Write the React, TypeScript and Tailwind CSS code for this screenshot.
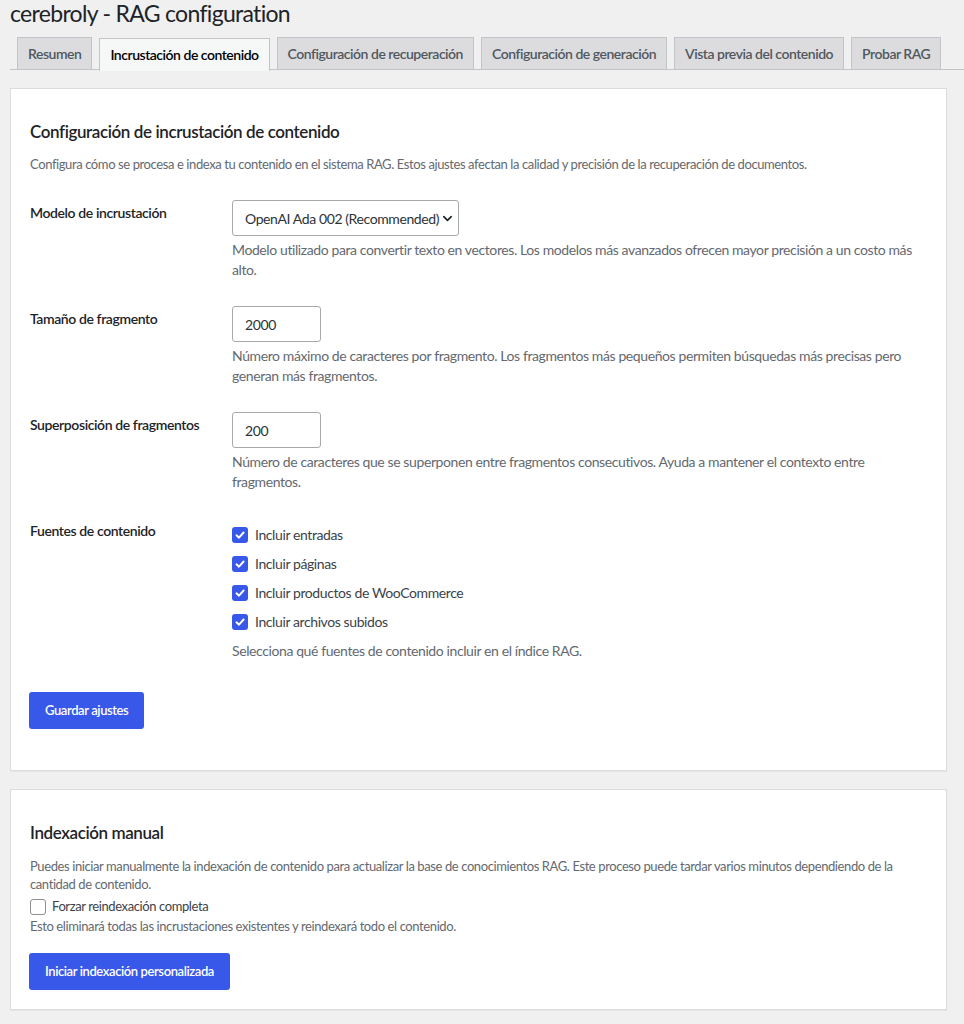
import React from "react";

const tabs = [
  "Resumen",
  "Incrustación de contenido",
  "Configuración de recuperación",
  "Configuración de generación",
  "Vista previa del contenido",
  "Probar RAG",
];

function Chevron() {
  return (
    <svg width="11" height="11" viewBox="0 0 12 12" className="ml-[3px] shrink-0">
      <polyline
        points="2,4 6,8 10,4"
        fill="none"
        stroke="#1d2327"
        strokeWidth="1.8"
        strokeLinecap="round"
        strokeLinejoin="round"
      />
    </svg>
  );
}

function Check({ checked }: { checked: boolean }) {
  if (!checked) {
    return (
      <span className="inline-block w-[16px] h-[16px] rounded-[3px] border border-[#8c8f94] bg-white shrink-0" />
    );
  }
  return (
    <span className="inline-flex items-center justify-center w-[16px] h-[16px] rounded-[3px] bg-[#3858e9] shrink-0">
      <svg width="12" height="12" viewBox="0 0 12 12">
        <polyline
          points="2.5,6.3 5,8.7 9.6,3.5"
          fill="none"
          stroke="#ffffff"
          strokeWidth="1.9"
          strokeLinecap="round"
          strokeLinejoin="round"
        />
      </svg>
    </span>
  );
}

function Row({
  label,
  children,
}: {
  label: string;
  children: React.ReactNode;
}) {
  return (
    <div className="grid grid-cols-[202px_1fr]">
      <div className="pt-[3px] text-[14px] leading-[20px] font-semibold text-[#1d2327]">
        {label}
      </div>
      <div>{children}</div>
    </div>
  );
}

function Desc({ children }: { children: React.ReactNode }) {
  return (
    <p className="mt-[4px] text-[14px] leading-[19.5px] text-[#646970]">{children}</p>
  );
}

const sources = [
  "Incluir entradas",
  "Incluir páginas",
  "Incluir productos de WooCommerce",
  "Incluir archivos subidos",
];

export default function App() {
  return (
    <div className="min-h-screen bg-[#f0f0f1] font-['Lato',sans-serif] tracking-[-0.025em] text-[#3c434a]">
      <div className="pl-[10px]">
        <h1 className="text-[23px] leading-[26px] font-normal text-[#1d2327] pt-0 tracking-[-0.03em]">
          cerebroly - RAG configuration
        </h1>

        <nav className="mt-[11px] flex border-b border-[#c3c4c7] h-[33px] pl-[7px] gap-[7px] whitespace-nowrap tracking-[-0.03em]">
          {tabs.map((t, i) => {
            const active = i === 1;
            return (
              <span
                key={t}
                className={
                  active
                    ? "h-[33px] px-[10px] border border-b-0 border-[#c3c4c7] bg-[#f6f7f7] text-[14px] font-semibold leading-[32px] text-black relative top-[1px]"
                    : "h-[33px] px-[10px] border border-[#c3c4c7] bg-[#dcdcde] text-[14px] font-semibold leading-[31px] text-[#50575e]"
                }
              >
                {t}
              </span>
            );
          })}
        </nav>

        <div className="mr-[17px]">
          <section className="mt-[18px] bg-white border border-[#dcdcde] shadow-[0_1px_1px_rgba(0,0,0,0.04)] px-[19px] pt-[32px] pb-[41px]">
            <h2 className="text-[17px] leading-[22px] font-semibold text-[#1d2327]">
              Configuración de incrustación de contenido
            </h2>
            <p className="mt-[12px] text-[13px] leading-[18px] text-[#646970]">
              Configura cómo se procesa e indexa tu contenido en el sistema RAG. Estos ajustes
              afectan la calidad y precisión de la recuperación de documentos.
            </p>

            <div className="mt-[27px] flex flex-col gap-[27px]">
              <Row label="Modelo de incrustación">
                <div className="inline-flex items-center h-[36px] pl-[12px] pr-[5px] border border-[#a7aaad] rounded-[3px] bg-white text-[14px] text-[#2c3338]">
                  <span>OpenAI Ada 002 (Recommended)</span>
                  <Chevron />
                </div>
                <Desc>
                  Modelo utilizado para convertir texto en vectores. Los modelos más avanzados
                  ofrecen mayor precisión a un costo más alto.
                </Desc>
              </Row>

              <Row label="Tamaño de fragmento">
                <div className="flex items-center w-[89px] h-[36px] px-[12px] border border-[#a7aaad] rounded-[3px] bg-white text-[14px] text-[#2c3338]">
                  2000
                </div>
                <Desc>
                  Número máximo de caracteres por fragmento. Los fragmentos más pequeños
                  permiten búsquedas más precisas pero generan más fragmentos.
                </Desc>
              </Row>

              <Row label="Superposición de fragmentos">
                <div className="flex items-center w-[89px] h-[36px] px-[12px] border border-[#a7aaad] rounded-[3px] bg-white text-[14px] text-[#2c3338]">
                  200
                </div>
                <Desc>
                  Número de caracteres que se superponen entre fragmentos consecutivos. Ayuda a
                  mantener el contexto entre fragmentos.
                </Desc>
              </Row>

              <Row label="Fuentes de contenido">
                <div className="mt-[2px] flex flex-col">
                  {sources.map((s) => (
                    <label
                      key={s}
                      className="flex items-center gap-[7px] h-[29px] text-[14px] text-[#3c434a]"
                    >
                      <Check checked />
                      <span>{s}</span>
                    </label>
                  ))}
                </div>
                <p className="mt-[5px] text-[14px] leading-[20px] text-[#646970]">
                  Selecciona qué fuentes de contenido incluir en el índice RAG.
                </p>
              </Row>
            </div>

            <button className="block mt-[31px] -ml-[1px] h-[37px] px-[16px] rounded-[3px] bg-[#3858e9] text-white text-[13px] font-semibold">
              Guardar ajustes
            </button>
          </section>

          <section className="mt-[18px] bg-white border border-[#dcdcde] shadow-[0_1px_1px_rgba(0,0,0,0.04)] px-[19px] pt-[32px] pb-[19px]">
            <h2 className="text-[17px] leading-[22px] font-semibold text-[#1d2327]">
              Indexación manual
            </h2>
            <p className="mt-[13px] text-[13px] leading-[18px] text-[#646970]">
              Puedes iniciar manualmente la indexación de contenido para actualizar la base de
              conocimientos RAG. Este proceso puede tardar varios minutos dependiendo de la
              cantidad de contenido.
            </p>
            <label className="mt-[4px] flex items-center gap-[6px] h-[20px] text-[13px] text-[#3c434a]">
              <Check checked={false} />
              <span>Forzar reindexación completa</span>
            </label>
            <p className="text-[13px] leading-[18px] text-[#646970]">
              Esto eliminará todas las incrustaciones existentes y reindexará todo el contenido.
            </p>
            <button className="block mt-[18px] -ml-[1px] h-[37px] px-[16px] rounded-[3px] bg-[#3858e9] text-white text-[13px] font-semibold">
              Iniciar indexación personalizada
            </button>
          </section>
        </div>
        <div className="h-[14px]" />
      </div>
    </div>
  );
}
